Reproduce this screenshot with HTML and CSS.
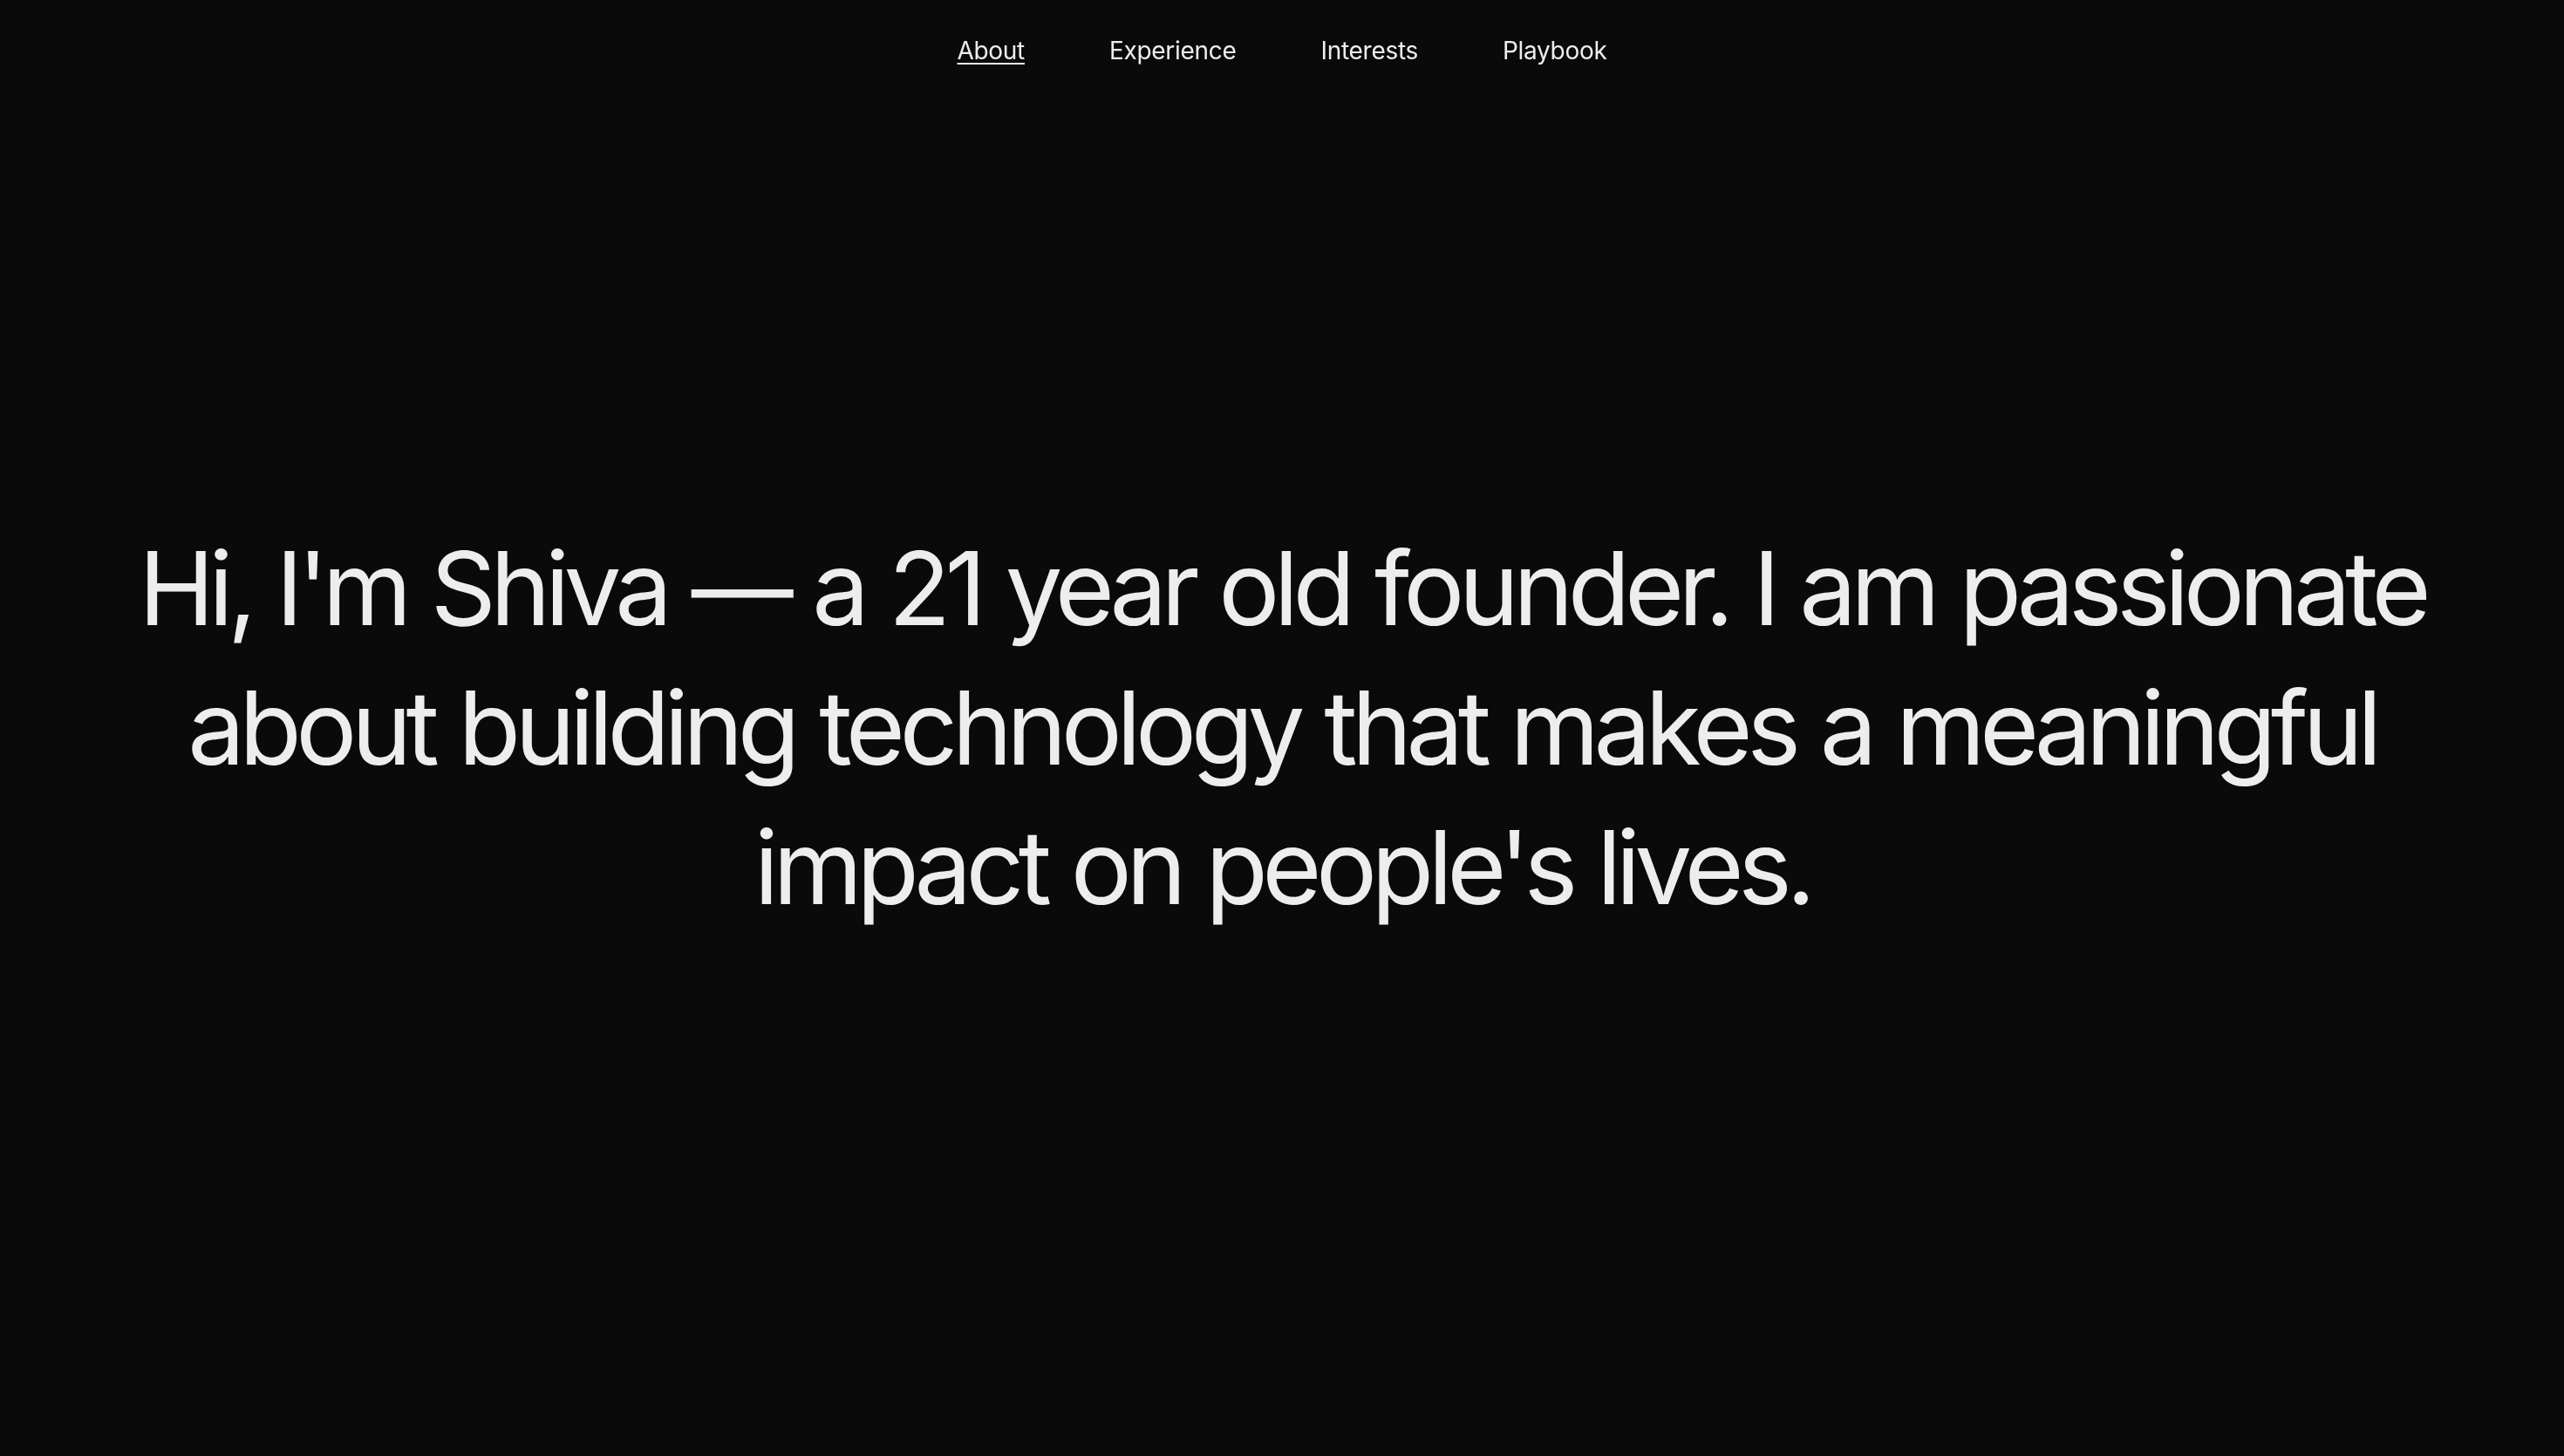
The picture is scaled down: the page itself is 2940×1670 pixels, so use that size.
FILE: index.html
```html
<!DOCTYPE html>
<html lang="en">
<head>
<meta charset="utf-8">
<title>Shiva</title>
<link rel="stylesheet" href="styles.css">
</head>
<body>
<header class="nav">
  <a class="nav-link active" href="#about">About</a>
  <a class="nav-link" href="#experience">Experience</a>
  <a class="nav-link" href="#interests">Interests</a>
  <a class="nav-link" href="#playbook">Playbook</a>
</header>
<main class="hero">
  <h1 class="hero-text">Hi, I'm Shiva — a 21 year old founder. I am passionate about building technology that makes a meaningful impact on people's lives.</h1>
</main>
</body>
</html>
```
FILE: styles.css
```css
html, body {
  margin: 0;
  padding: 0;
  background: #0a0a0a;
  color: #ededed;
  font-family: Inter, "Noto Sans", sans-serif;
}
.nav {
  position: fixed;
  top: 0;
  left: 0;
  right: 0;
  display: flex;
  justify-content: center;
  gap: 97px;
  padding-top: 40px;
}
.nav-link {
  color: #ededed;
  text-decoration: none;
  font-size: 28px;
  line-height: 36px;
  letter-spacing: -0.3px;
}
.nav-link.active {
  text-decoration: underline;
  text-underline-offset: 4px;
  text-decoration-thickness: 2px;
}
.hero {
  min-height: 100vh;
  display: flex;
  align-items: center;
  justify-content: center;
}
.hero-text {
  margin: 0;
  max-width: 2700px;
  text-align: center;
  font-weight: 400;
  font-size: 117px;
  line-height: 160px;
  letter-spacing: -6.6px;
  word-spacing: 2px;
}
```
